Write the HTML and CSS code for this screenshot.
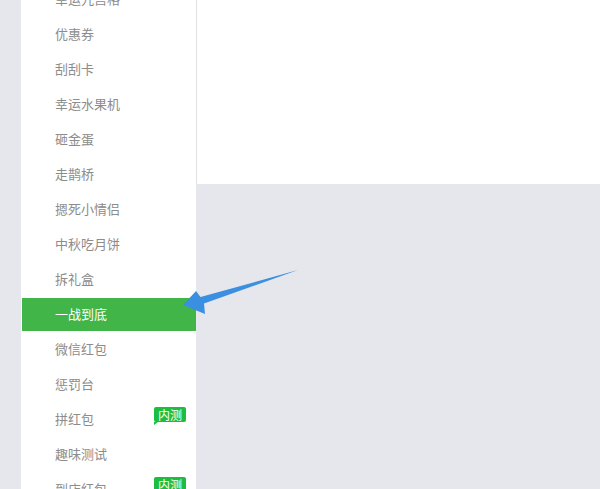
FILE: index.html
```html
<!DOCTYPE html>
<html lang="zh-CN">
<head>
  <meta charset="UTF-8" />
  <meta name="viewport" content="width=device-width, initial-scale=1" />
  <title>活动列表</title>
  <link rel="stylesheet" href="styles.css">
</head>
<body>
  <div class="layout">
    <ul class="side-menu">
      <li class="menu-item">幸运九宫格</li>
      <li class="menu-item">优惠券</li>
      <li class="menu-item">刮刮卡</li>
      <li class="menu-item">幸运水果机</li>
      <li class="menu-item">砸金蛋</li>
      <li class="menu-item">走鹊桥</li>
      <li class="menu-item">摁死小情侣</li>
      <li class="menu-item">中秋吃月饼</li>
      <li class="menu-item">拆礼盒</li>
      <li class="menu-item active">一战到底</li>
      <li class="menu-item">微信红包</li>
      <li class="menu-item">惩罚台</li>
      <li class="menu-item">拼红包<span class="badge">内测</span></li>
      <li class="menu-item">趣味测试</li>
      <li class="menu-item">到店红包<span class="badge">内测</span></li>
    </ul>
    <div class="main">
      <div class="panel"></div>
    </div>
  </div>

  <!-- 提示箭头 -->
  <svg class="pointer" width="140" height="60" viewBox="0 0 140 60">
    <path d="M128 10 L34 43.5 L35 54 L13 45 L26 31 L30.5 37 Z" fill="#3b8fe0"/>
  </svg>
</body>
</html>
```

FILE: styles.css
```css
body {
  margin: 0;
  background-color: #e6e6ed;
  font-family: "Noto Sans CJK SC", "Liberation Sans", sans-serif;
  overflow: hidden;
}

.layout {
  display: flex;
  align-items: flex-start;
  height: 489px;
}

.side-menu {
  list-style: none;
  margin: -17px 0 0 21px;
  padding: 0;
  width: 175px;
  background-color: #fff;
  flex-shrink: 0;
}

.menu-item {
  position: relative;
  height: 33px;
  margin-bottom: 2px;
  line-height: 31px;
  padding-left: 34px;
  font-size: 13px;
  color: #8c8c8c;
}

.menu-item.active {
  background-color: #42b549;
  color: #fff;
  margin-left: 1px;
  padding-left: 33px;
}

.badge {
  position: absolute;
  right: 10px;
  top: 4px;
  height: 15px;
  line-height: 15px;
  padding: 0 4px;
  background-color: #1dbd3d;
  color: #fff;
  font-size: 12px;
  border-radius: 2px;
}

.badge::after {
  content: "";
  position: absolute;
  left: 0;
  bottom: -3px;
  border-left: 4px solid #1dbd3d;
  border-bottom: 3px solid transparent;
}

.main {
  flex: 1;
}

.panel {
  height: 184px;
  background-color: #fff;
  border-left: 1px solid #e2e2e2;
}

.pointer {
  position: absolute;
  left: 170px;
  top: 260px;
}
```
